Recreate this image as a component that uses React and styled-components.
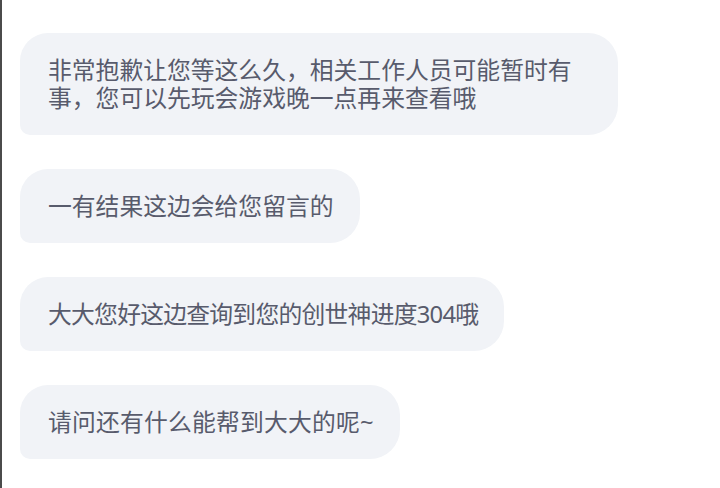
import React from "react";
import styled, { createGlobalStyle } from "styled-components";

const Global = createGlobalStyle`
  html, body { margin: 0; padding: 0; background: #ffffff; }
  body { font-family: "Noto Sans", "Noto Sans CJK SC", sans-serif; }
`;

const Chat = styled.div`
  box-sizing: border-box;
  width: 720px;
  height: 488px;
  overflow: hidden;
  border-left: 2px solid #4b4b4b;
  padding: 33px 0 0 18px;
  display: flex;
  flex-direction: column;
  align-items: flex-start;
  gap: 34px;
  background: #ffffff;
`;

const Bubble = styled.div`
  box-sizing: border-box;
  max-width: 598px;
  padding: 23px 26px 23px 28px;
  background: #f1f3f7;
  border-radius: 28px 30px 30px 10px;
  color: #585b6c;
  font-family: "Noto Sans", "Noto Sans CJK SC", sans-serif;
  font-size: 23.8px;
  line-height: 28px;
  letter-spacing: ${(p) => p.$spacing || 0}px;
`;

const messages = [
  { text: "非常抱歉让您等这么久，相关工作人员可能暂时有事，您可以先玩会游戏晚一点再来查看哦" },
  { text: "一有结果这边会给您留言的" },
  { text: "大大您好这边查询到您的创世神进度304哦", spacing: -0.75 },
  { text: "请问还有什么能帮到大大的呢~", spacing: 0.2 },
];

export default function App() {
  return (
    <>
      <Global />
      <Chat>
        {messages.map((m, i) => (
          <Bubble key={i} $spacing={m.spacing}>
            {m.text}
          </Bubble>
        ))}
      </Chat>
    </>
  );
}
